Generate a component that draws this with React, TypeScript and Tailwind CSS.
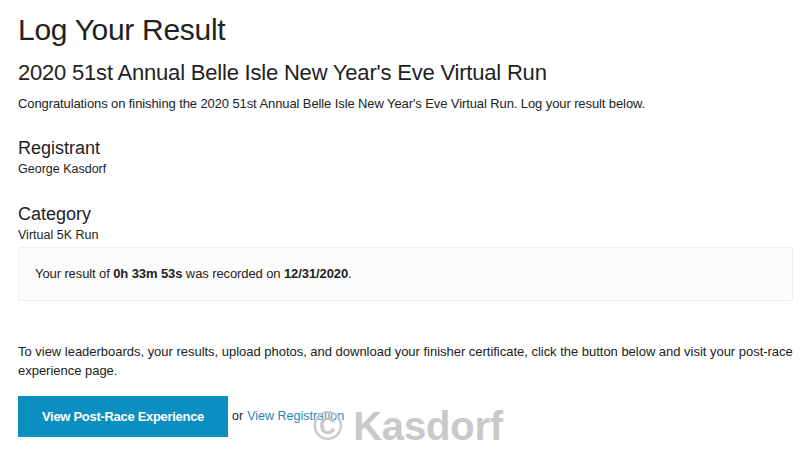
import React from 'react';

const font = { fontFamily: '"Liberation Sans", Arial, sans-serif' };

export default function App() {
  return (
    <div className="relative w-[811px] h-[454px] bg-white text-[#222] overflow-hidden" style={font}>
      <div className="px-[18px] pt-[12px]">
        <h1 className="text-[30px] leading-[36px] tracking-[-0.3px]">Log Your Result</h1>
        <h2 className="mt-[12px] text-[22px] leading-[26px] tracking-[-0.2px]">
          2020 51st Annual Belle Isle New Year's Eve Virtual Run
        </h2>
        <p className="mt-[9px] text-[13px] leading-[18px] tracking-[-0.1px]">
          Congratulations on finishing the 2020 51st Annual Belle Isle New Year's Eve Virtual Run. Log your result below.
        </p>

        <div className="mt-[24px]">
          <h3 className="text-[18px] leading-[22px]">Registrant</h3>
          <div className="text-[12.5px] leading-[20px]">George Kasdorf</div>
        </div>

        <div className="mt-[24px]">
          <h3 className="text-[18px] leading-[22px]">Category</h3>
          <div className="text-[12.5px] leading-[20px]">Virtual 5K Run</div>
        </div>

        <div className="mt-[2px] w-[775px] h-[54px] flex items-center px-[16px] bg-[#fcfcfc] border border-[#efefef] rounded-[2px] text-[13px] tracking-[-0.1px]">
          <span>
            Your result of <b>0h 33m 53s</b> was recorded on <b>12/31/2020</b>.
          </span>
        </div>

        <p className="mt-[41px] text-[13px] leading-[19px] tracking-[-0.02px]">
          To view leaderboards, your results, upload photos, and download your finisher certificate, click the button below and visit your post-race experience page.
        </p>

        <div className="mt-[16px] flex items-center text-[12.5px]">
          <button className="w-[210px] h-[41px] bg-[#0a8fc0] text-white text-[13px] font-bold tracking-[-0.3px]">
            View Post-Race Experience
          </button>
          <span className="ml-[4px]">or</span>
          <span className="ml-[4px] text-[#1f86b8]">View Registration</span>
        </div>
      </div>

      <div
        className="absolute left-[313px] top-[404px] text-[40px] leading-[44px] font-bold text-[#c4c4c4] opacity-90 tracking-[-0.2px] pointer-events-none"
        style={{ textShadow: '0 0 2px #fff' }}
      >
        © Kasdorf
      </div>
    </div>
  );
}
